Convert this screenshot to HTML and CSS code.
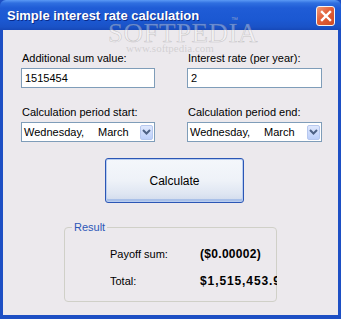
FILE: index.html
```html
<!DOCTYPE html>
<html>
<head>
<meta charset="utf-8">
<link rel="stylesheet" href="styles.css">
</head>
<body>
<div class="window">
  <div class="titlebar">
    <span class="title">Simple interest rate calculation</span>
    <div class="close">
      <svg width="12" height="12" viewBox="0 0 12 12"><path d="M2 2 L10 10 M10 2 L2 10" stroke="#fff" stroke-width="2.4" stroke-linecap="square"/></svg>
    </div>
  </div>
  <div class="body">
    <div class="grid">
      <div class="field">
        <label class="lbl">Additional sum value:</label>
        <div class="input">1515454</div>
      </div>
      <div class="field">
        <label class="lbl">Interest rate (per year):</label>
        <div class="input">2</div>
      </div>
      <div class="field">
        <label class="lbl">Calculation period start:</label>
        <div class="select"><span class="day">Wednesday,</span><span class="month">March</span><span class="drop"><svg width="9" height="6" viewBox="0 0 9 6"><path d="M1 1 L4.5 4.5 L8 1" fill="none" stroke="#4d6185" stroke-width="2"/></svg></span></div>
      </div>
      <div class="field">
        <label class="lbl">Calculation period end:</label>
        <div class="select"><span class="day">Wednesday,</span><span class="month">March</span><span class="drop"><svg width="9" height="6" viewBox="0 0 9 6"><path d="M1 1 L4.5 4.5 L8 1" fill="none" stroke="#4d6185" stroke-width="2"/></svg></span></div>
      </div>
    </div>
    <div class="btnrow"><div class="button">Calculate</div></div>
    <div class="group">
      <span class="legend">Result</span>
      <div class="res"><span class="rl">Payoff sum:</span><span class="rv">($0.00002)</span></div>
      <div class="res"><span class="rl">Total:</span><span class="rv total">$1,515,453.99</span></div>
    </div>
  </div>
  <div class="wm-big">SOFTPEDIA</div>
  <div class="wm-tm">™</div>
  <div class="wm-url">www.softpedia.com</div>
</div>
</body>
</html>
```
FILE: styles.css
```css
html, body { margin: 0; padding: 0; }
body { width: 341px; height: 319px; overflow: hidden; background: #ece9ed; font-family: "Liberation Sans", Arial, sans-serif; }
.window { position: relative; width: 341px; height: 319px; display: flex; flex-direction: column; background: #1d4fc4; }
.titlebar { height: 30px; flex: none; display: flex; align-items: center; justify-content: space-between; padding: 0 6px 0 7px; box-sizing: border-box;
  background: linear-gradient(#5b9af5 0px, #2f6fe0 3px, #1f5cd6 8px, #1b58d2 20px, #1a52c6 27px, #1648b8 30px); border-radius: 6px 6px 0 0; }
.title { color: #fff; font-weight: bold; font-size: 13px; letter-spacing: 0; text-shadow: 1px 1px 0 #0a2a88; margin-top: 1px; }
.close { width: 19px; height: 20px; box-sizing: border-box; border: 1px solid #f4f4f4; border-radius: 3px; display: flex; align-items: center; justify-content: center;
  background: linear-gradient(135deg, #f19a78 0%, #e2603a 45%, #cf4a22 100%); margin-top: 1px; }
.body { flex: 1; margin: 0 3px 4px 3px; background: #ece9ed; padding: 22px 16px 0 18px; box-sizing: border-box; display: flex; flex-direction: column; }
.grid { display: grid; grid-template-columns: 134px 135px; column-gap: 32px; row-gap: 18px; }
.field { display: flex; flex-direction: column; }
.lbl { font-size: 11px; line-height: 13px; color: #000; height: 16px; margin-left: 1px; }
.input { height: 20px; box-sizing: border-box; border: 1px solid #7f9db9; background: #fff; font-size: 11px; line-height: 18px; padding-left: 3px; color: #000; }
.select { height: 20px; box-sizing: border-box; border: 1px solid #7f9db9; background: #fff; font-size: 11px; line-height: 18px; padding-left: 2px; display: flex; align-items: center; color: #000; }
.day { width: 74px; flex: none; }
.month { flex: 1; }
.drop { width: 13px; height: 15px; margin-right: 1px; box-sizing: border-box; border: 1px solid #b7c8ef; border-radius: 2px; background: linear-gradient(#dfe8fd, #bccffa); display: flex; align-items: center; justify-content: center; }
.btnrow { display: flex; padding-left: 84px; margin-top: 16px; }
.button { width: 139px; height: 45px; box-sizing: border-box; border: 1px solid #2b56b5; border-radius: 3px; display: flex; align-items: center; justify-content: center; font-size: 12px; color: #000;
  background: linear-gradient(#f4f7fb 0%, #eef2f8 50%, #dfe6f2 80%, #cfd9ec 100%); box-shadow: inset 0 0 0 1px #b8cdf0, inset 0 -2px 0 1px #a9c0e8; }
.group { position: relative; margin: 24px 0 0 43px; width: 213px; height: 75px; box-sizing: border-box; border: 1px solid #d0d0c8; border-radius: 4px; padding: 20px 0 0 45px; }
.legend { position: absolute; left: 7px; top: -7px; background: #ece9ed; color: #2c57b8; font-size: 11px; line-height: 13px; padding: 0 2px; }
.res { display: flex; height: 27px; line-height: 13px; font-size: 11px; color: #000; white-space: nowrap; overflow: hidden; width: 167px; }
.rl { width: 90px; flex: none; }
.rv { font-weight: bold; font-size: 12px; letter-spacing: 0.3px; }
.rv.total { letter-spacing: 0.9px; }
.wm-big { position: absolute; left: 108px; top: 18px; font-family: "Liberation Serif", serif; font-size: 27px; letter-spacing: 0.5px; color: rgba(255,255,255,0.35); -webkit-text-stroke: 0.6px rgba(120,120,120,0.35); pointer-events: none; }
.wm-tm { position: absolute; left: 231px; top: 16px; font-size: 7px; color: rgba(200,200,200,0.6); }
.wm-url { position: absolute; left: 126px; top: 42px; font-family: "Liberation Serif", serif; font-size: 11px; color: rgba(160,160,160,0.35); }
```
